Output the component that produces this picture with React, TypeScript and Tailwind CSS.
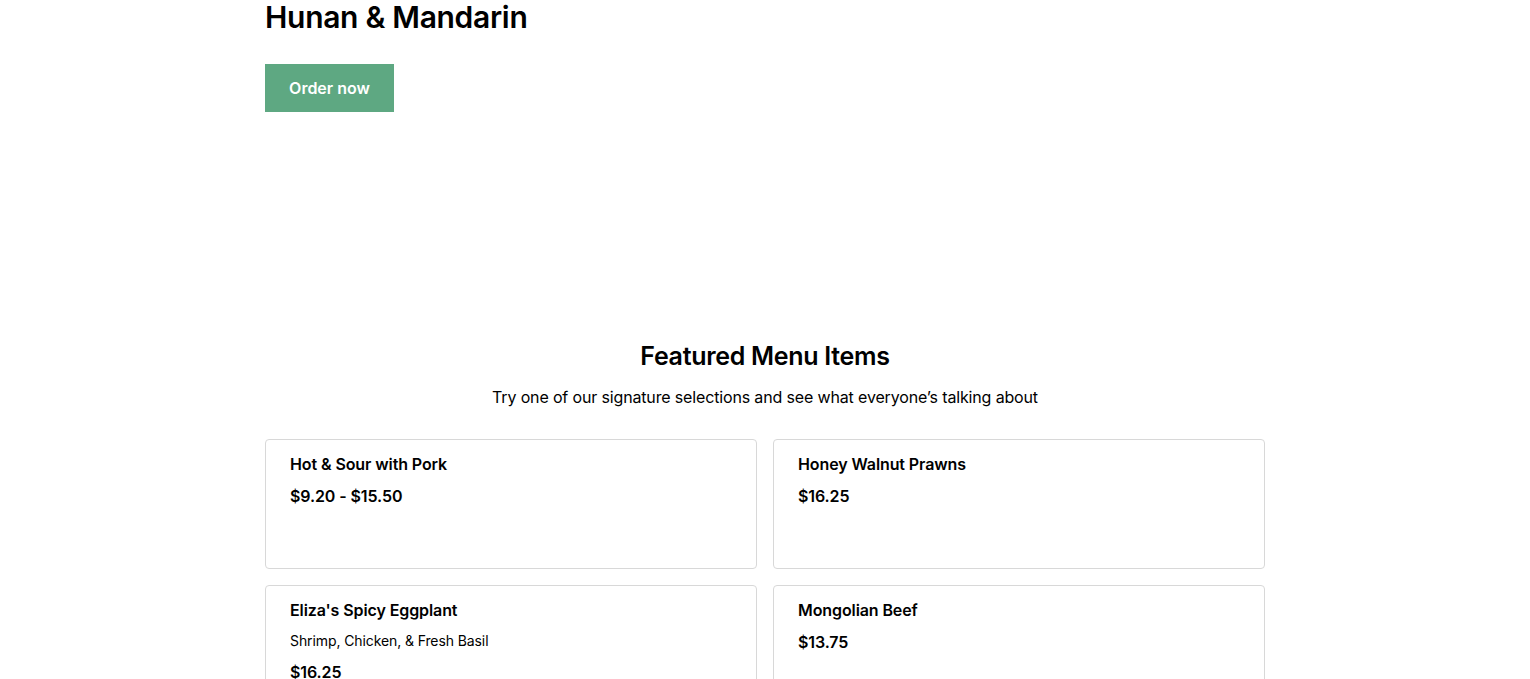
import React from "react";

const items = [
  { name: "Hot & Sour with Pork", price: "$9.20 - $15.50" },
  { name: "Honey Walnut Prawns", price: "$16.25" },
  { name: "Eliza's Spicy Eggplant", desc: "Shrimp, Chicken, & Fresh Basil", price: "$16.25" },
  { name: "Mongolian Beef", price: "$13.75" },
];

export default function App() {
  return (
    <div className="min-h-screen bg-white text-black" style={{ fontFamily: "Inter, 'Liberation Sans', sans-serif" }}>
      <div className="mx-auto w-[1000px]">
        <section className="pb-[226px]">
          <h1 className="-mt-[3px] text-[30px] leading-[40px] font-semibold tracking-[-0.3px]">Hunan &amp; Mandarin</h1>
          <button className="mt-[27px] h-[48px] w-[129px] bg-[#5ea882] text-[16px] font-semibold text-white">
            Order now
          </button>
        </section>
        <section>
          <h2 className="text-center text-[25px] leading-[36px] font-semibold tracking-[-0.3px]">Featured Menu Items</h2>
          <p className="mt-[11px] text-center text-[16px] leading-[24px] tracking-[-0.15px]">
            Try one of our signature selections and see what everyone’s talking about
          </p>
          <div className="mt-[30px] grid grid-cols-2 gap-4">
            {items.map((it) => (
              <div key={it.name} className="min-h-[130px] rounded-[4px] border border-[#d8d8d8] px-6 pt-3 pb-6">
                <div className="text-[16px] leading-[24px] font-semibold tracking-[-0.1px]">{it.name}</div>
                {it.desc && <div className="mt-[9px] text-[14px] leading-[20px] tracking-[-0.1px]">{it.desc}</div>}
                <div className={`${it.desc ? "mt-[9px]" : "mt-2"} text-[16px] leading-[24px] font-semibold tracking-[-0.1px]`}>
                  {it.price}
                </div>
              </div>
            ))}
          </div>
        </section>
      </div>
    </div>
  );
}
